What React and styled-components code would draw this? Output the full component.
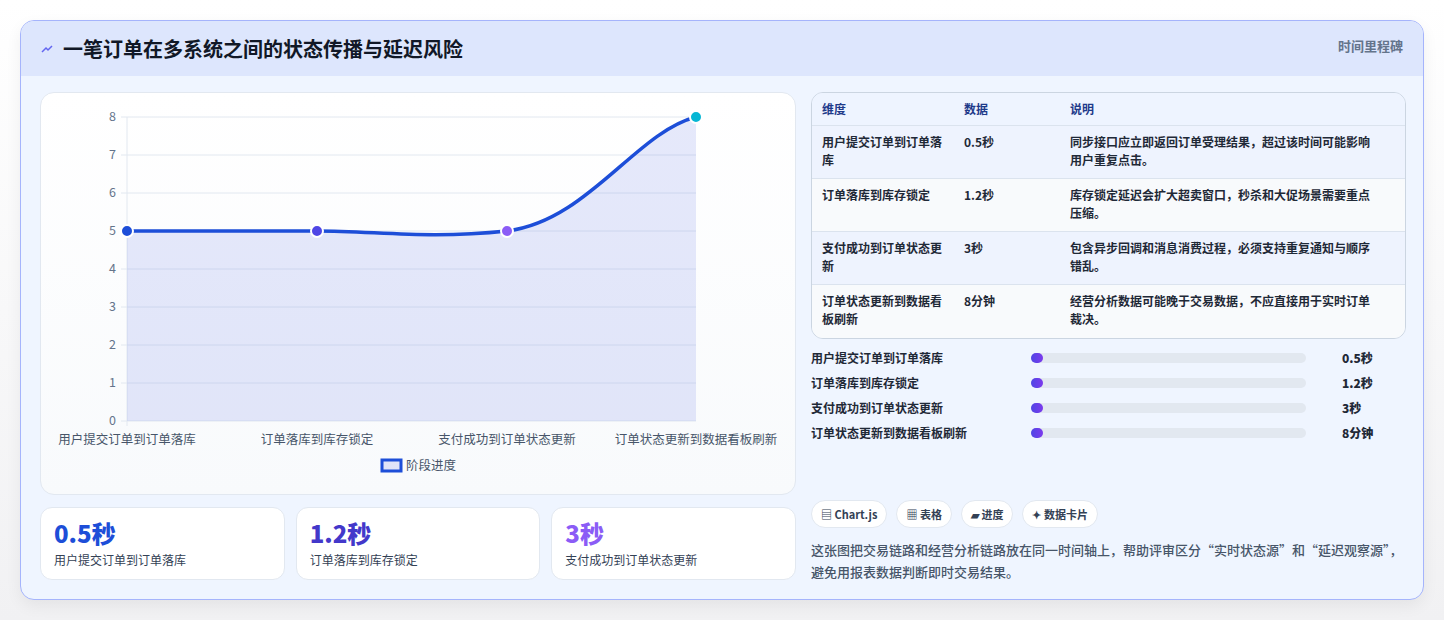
import React from 'react';
import styled, { createGlobalStyle } from 'styled-components';

const Global = createGlobalStyle`
  body { margin: 0; background: #f3f4f6; font-family: "Noto Sans CJK SC", "Noto Sans", sans-serif; }
  * { box-sizing: border-box; }
`;

const Page = styled.div`
  padding: 20px 20px 20px 20px;
  height: 620px;
  background: linear-gradient(#ffffff, #f1f1f3);
`;

const Card = styled.div`
  height: 580px;
  border: 1px solid #a5b4fc;
  border-radius: 14px;
  background: #eff5ff;
  overflow: hidden;
  box-shadow: 0 6px 16px rgba(0,0,0,0.06);
`;

const Header = styled.div`
  height: 55px;
  background: #dde6fd;
  display: flex;
  align-items: center;
  justify-content: space-between;
  padding: 0 20px;
`;

const Title = styled.h1`
  margin: 0;
  font-size: 20px;
  font-weight: 700;
  color: #111827;
  display: flex;
  align-items: center;
  gap: 10px;
`;

const HeaderTag = styled.span`
  font-size: 13px;
  font-weight: 700;
  color: #64748b;
  align-self: flex-start;
  margin-top: 15px;
`;

const Body = styled.div`
  display: grid;
  grid-template-columns: 756px 595px;
  gap: 15px;
  padding: 16px 19px 0 19px;
`;

const Col = styled.div`
  display: flex;
  flex-direction: column;
`;

const ChartBox = styled.div`
  height: 403px;
  background: linear-gradient(#ffffff, #f8fafc);
  border: 1px solid #e2e8f0;
  border-radius: 14px;
`;

const Stats = styled.div`
  display: grid;
  grid-template-columns: repeat(3, 1fr);
  gap: 11px;
  margin-top: 12px;
`;

const Stat = styled.div`
  height: 73px;
  background: #fff;
  border: 1px solid #e2e8f0;
  border-radius: 12px;
  padding: 9px 13px;
`;

const StatValue = styled.div`
  font-size: 24px;
  font-weight: 800;
  line-height: 32px;
  color: ${p => p.$c};
`;

const StatLabel = styled.div`
  font-size: 12px;
  color: #334155;
  margin-top: 2px;
`;

const Table = styled.div`
  border: 1px solid #cbd5e1;
  border-radius: 12px;
  overflow: hidden;
`;

const Row = styled.div`
  display: grid;
  grid-template-columns: 142px 106px 1fr;
  padding: 0 10px;
  background: ${p => p.$bg};
  border-bottom: ${p => (p.$last ? 'none' : '1px solid #dbe3ee')};
  min-height: ${p => (p.$head ? '33px' : '53px')};
  align-items: ${p => (p.$head ? 'center' : 'start')};
  padding-top: ${p => (p.$head ? '0' : '7px')};
  font-size: 12px;
  line-height: 18px;
  color: ${p => (p.$head ? '#1e3a8a' : '#1f2937')};
  font-weight: 700;
`;

const Cell = styled.div`
  padding-right: 16px;
`;

const Bars = styled.div`
  margin-top: 9px;
  display: flex;
  flex-direction: column;
  gap: 6px;
`;

const BarRow = styled.div`
  display: grid;
  grid-template-columns: 220px 275px 1fr;
  align-items: center;
  height: 19px;
  font-size: 12px;
  color: #1f2937;
  font-weight: 600;
`;

const Track = styled.div`
  height: 10px;
  background: #e2e8f0;
  border-radius: 5px;
  width: 275px;
`;

const Fill = styled.div`
  height: 10px;
  border-radius: 5px;
  background: linear-gradient(90deg, #4f46e5, #7c3aed);
`;

const BarValue = styled.span`
  font-weight: 800;
  padding-left: 36px;
`;

const Chips = styled.div`
  display: flex;
  gap: 9px;
  margin-top: 58px;
`;

const Chip = styled.span`
  height: 28px;
  padding: 0 9px;
  display: flex;
  align-items: center;
  background: #fff;
  border: 1px solid #e2e8f0;
  border-radius: 14px;
  font-size: 11px;
  font-weight: 700;
  color: #334155;
`;

const Note = styled.p`
  margin: 11px 0 0;
  font-size: 13px;
  line-height: 22px;
  color: #475569;
  font-weight: 500;
`;

const AxisLabel = styled.text`
  font-family: "Noto Sans CJK SC", sans-serif;
  font-size: 12.5px;
  fill: #64748b;
`;

const rows = [
  ['用户提交订单到订单落库', '0.5秒', '同步接口应立即返回订单受理结果，超过该时间可能影响用户重复点击。'],
  ['订单落库到库存锁定', '1.2秒', '库存锁定延迟会扩大超卖窗口，秒杀和大促场景需要重点压缩。'],
  ['支付成功到订单状态更新', '3秒', '包含异步回调和消息消费过程，必须支持重复通知与顺序错乱。'],
  ['订单状态更新到数据看板刷新', '8分钟', '经营分析数据可能晚于交易数据，不应直接用于实时订单裁决。'],
];

function Chart() {
  // chart-local coords: box starts at x=40,y=93 on page
  const ox = -40, oy = -93;
  const X = [126, 316, 506, 695].map(v => v + ox);
  const Y = v => 421 + oy - v * 38;
  const line = `M${X[0]} ${Y(5)} L${X[1]} ${Y(5)} C${X[1] + 60} ${Y(5)} ${X[2] - 80} ${Y(4.78)} ${X[2]} ${Y(5)} C${X[2] + 80} ${Y(5.25)} ${X[3] - 60} ${Y(7.6)} ${X[3]} ${Y(8)}`;
  const pts = [['#1d4ed8', 5], ['#4f46e5', 5], ['#8b5cf6', 5], ['#06b6d4', 8]];
  const labels = ['用户提交订单到订单落库', '订单落库到库存锁定', '支付成功到订单状态更新', '订单状态更新到数据看板刷新'];
  return (
    <svg width="754" height="401">
      {[0, 1, 2, 3, 4, 5, 6, 7, 8].map(v => (
        <g key={v}>
          <line x1={X[0] - 6} x2={X[3]} y1={Y(v)} y2={Y(v)} stroke="#e2e8f0" />
          <AxisLabel x={X[0] - 11} y={Y(v) + 4} textAnchor="end">{v}</AxisLabel>
        </g>
      ))}
      <line x1={X[0]} x2={X[0]} y1={Y(8)} y2={Y(0) + 5} stroke="#e2e8f0" />
      <path d={`${line} L${X[3]} ${Y(0)} L${X[0]} ${Y(0)} Z`} fill="rgba(99,120,230,0.16)" />
      <path d={line} fill="none" stroke="#1d4ed8" strokeWidth="3.5" />
      {pts.map(([c, v], i) => (
        <circle key={i} cx={X[i]} cy={Y(v)} r="6" fill={c} stroke="#fff" strokeWidth="2" />
      ))}
      {labels.map((l, i) => (
        <AxisLabel key={l} x={X[i]} y={351} textAnchor="middle" style={{ fill: '#475569' }}>{l}</AxisLabel>
      ))}
      <rect x="341" y="367" width="19" height="11" fill="rgba(99,120,230,0.16)" stroke="#1d4ed8" strokeWidth="3" />
      <AxisLabel x="365" y="377" style={{ fill: '#475569' }}>阶段进度</AxisLabel>
    </svg>
  );
}

export default function App() {
  return (
    <Page>
      <Global />
      <Card>
        <Header>
          <Title>
            <svg width="12" height="10" viewBox="0 0 12 10">
              <path d="M1 8 L5 4 L7 6 L11 2" fill="none" stroke="#6366f1" strokeWidth="1.5" />
            </svg>
            一笔订单在多系统之间的状态传播与延迟风险
          </Title>
          <HeaderTag>时间里程碑</HeaderTag>
        </Header>
        <Body>
          <Col>
            <ChartBox><Chart /></ChartBox>
            <Stats>
              <Stat><StatValue $c="#1d4ed8">0.5秒</StatValue><StatLabel>用户提交订单到订单落库</StatLabel></Stat>
              <Stat><StatValue $c="#4338ca">1.2秒</StatValue><StatLabel>订单落库到库存锁定</StatLabel></Stat>
              <Stat><StatValue $c="#8b5cf6">3秒</StatValue><StatLabel>支付成功到订单状态更新</StatLabel></Stat>
            </Stats>
          </Col>
          <Col>
            <Table>
              <Row $head $bg="#eef4ff"><Cell>维度</Cell><Cell>数据</Cell><Cell>说明</Cell></Row>
              {rows.map((r, i) => (
                <Row key={r[0]} $bg={i % 2 ? '#f8fafc' : '#eef3fe'} $last={i === rows.length - 1}>
                  <Cell>{r[0]}</Cell><Cell>{r[1]}</Cell><Cell>{r[2]}</Cell>
                </Row>
              ))}
            </Table>
            <Bars>
              {rows.map(r => (
                <BarRow key={r[0]}>
                  <span>{r[0]}</span>
                  <Track><Fill style={{ width: 12 }} /></Track>
                  <BarValue>{r[1]}</BarValue>
                </BarRow>
              ))}
            </Bars>
            <Chips>
              <Chip>▤ Chart.js</Chip>
              <Chip>▦ 表格</Chip>
              <Chip>▰ 进度</Chip>
              <Chip>✦ 数据卡片</Chip>
            </Chips>
            <Note>这张图把交易链路和经营分析链路放在同一时间轴上，帮助评审区分“实时状态源”和“延迟观察源”，避免用报表数据判断即时交易结果。</Note>
          </Col>
        </Body>
      </Card>
    </Page>
  );
}
